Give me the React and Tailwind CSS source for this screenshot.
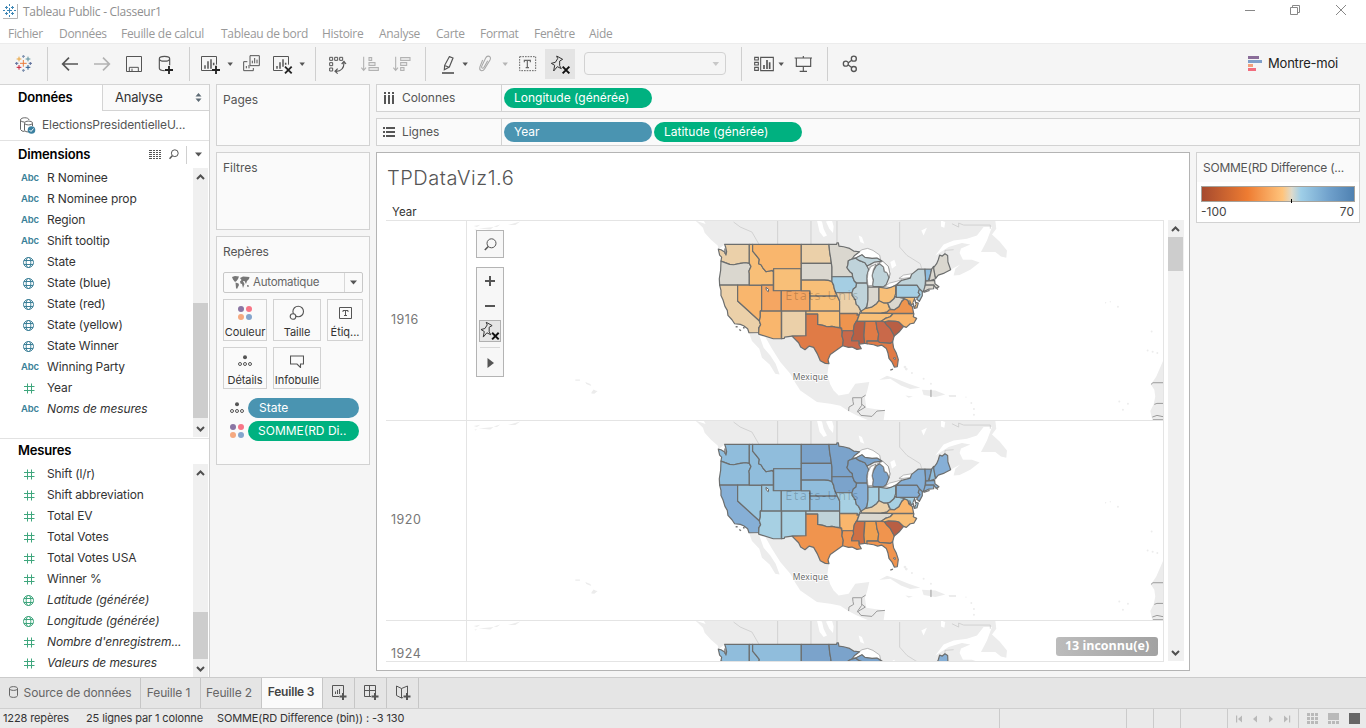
import React from "react";

const US = {
  WA: "M84 86 L92 88 L103 95 L107 104 L109 94 L106 80 L103 72 H177 V129 L165 127 L150 129 L130 133 L118 132 L108 128 L92 122 L94 110 L88 104Z",
  OR: "M92 122 L108 128 L118 132 L130 133 L150 129 L165 127 L177 129 L182 138 L176 152 L177 160 V194 H88 L87 175 L91 150Z",
  CA: "M88 194 H142 V242 L207 301 L211 313 L205 322 L206 337 L176 337 L172 325 L160 316 L150 312 L133 310 L125 298 L113 285 L111 270 L104 258 L98 238 L92 225 L92 210Z",
  NV: "M142 194 H214 V270 L210 272 L210 290 L207 301 L142 242Z",
  ID: "M177 72 H187 V92 L197 104 L207 117 L205 130 L212 133 L218 143 L227 154 L246 150 L249 155 V194 H177 V160 L176 152 L182 138 L177 129Z",
  MT: "M187 72 H333 V145 H250 V154 L246 150 L227 154 L218 143 L212 133 L205 130 L207 117 L197 104 L187 92Z",
  WY: "M250 145 H332 V211 H250Z",
  UT: "M214 194 H249 V211 H273 V272 H214Z",
  CO: "M273 211 H358 V272 H273Z",
  AZ: "M214 272 H273 V355 L249 355 L205 341 L206 322 L211 313 L207 301 L210 290 L210 272Z",
  NM: "M274 272 H347 V346 L305 347 L283 350 L282 354 L274 355Z",
  ND: "M333 72 H416 L418 95 L421 112 L423 129 H333Z",
  SD: "M333 129 H423 L425 140 V184 L414 180 L402 179 H333Z",
  NE: "M333 179 H402 L414 180 L425 184 L430 196 L434 212 L443 227 H359 V211 H333Z",
  KS: "M359 227 H441 L448 242 V272 H359Z",
  OK: "M347 272 H448 V294 L449 321 L435 320 L425 318 L410 319 L398 315 L382 312 V281 H347Z",
  TX: "M347 281 H382 V312 L398 315 L410 319 L425 318 L435 320 L452 323 L455 332 L455 346 L459 360 L457 376 L440 388 L420 402 L413 418 L416 430 L405 429 L390 421 L382 402 L370 381 L357 377 L344 388 L331 380 L325 367 L305 347 L347 346Z",
  MN: "M416 72 H439 L440 67 L444 67 L446 77 L460 79 L478 84 L490 92 L508 94 L492 106 L485 116 L474 121 L473 132 L470 142 L478 153 L486 159 L487 169 H425 V140 L421 112 L418 95Z",
  IA: "M425 169 H487 L492 182 L499 190 L497 200 L489 206 L487 217 H437 L432 206 L430 194 L425 184Z",
  MO: "M437 217 H485 L486 226 L495 238 L498 252 L505 258 L511 272 L505 283 L500 283 L501 279 H448 V242 L441 227Z",
  AR: "M448 280 H501 L500 284 L506 284 L500 300 L492 313 L489 331 H455 L454 323 L449 321Z",
  LA: "M457 331 H489 L490 341 L485 353 L484 361 H506 L506 372 L513 385 L500 387 L485 380 L475 381 L457 376 L459 360 L455 346Z",
  WI: "M474 121 L485 116 L496 113 L506 120 L524 127 L530 137 L535 147 L530 165 L530 188 H499 L492 182 L487 169 L486 159 L478 153 L470 142 L473 132Z",
  UP: "M496 113 L515 103 L524 111 L545 114 L560 113 L575 122 L553 125 L540 132 L530 137 L524 127 L506 120Z",
  MI: "M547 192 L549 178 L545 166 L550 150 L558 136 L568 130 L580 140 L582 154 L590 156 L596 172 L588 192 L580 199 L548 198Z",
  IL: "M499 188 H530 L533 200 V238 L530 258 L523 269 L512 272 L505 258 L498 252 L495 238 L486 226 L485 217 L489 206 L497 200Z",
  IN: "M533 200 H566 V241 L559 250 L545 260 L524 265 L530 258 L533 238Z",
  OH: "M566 200 L590 204 L604 200 L616 195 V220 L611 235 L600 245 L592 248 L580 248 L566 241Z",
  KY: "M512 279 L514 271 L524 265 L545 260 L559 250 L566 241 L580 248 L592 248 L597 262 L605 266 L590 275 L570 278 H512Z",
  TN: "M508 280 L512 278 L570 279 H608 L600 289 L585 294 L572 303 H500Z",
  MS: "M498 303 H523 L521 345 L523 369 L508 371 L506 361 H484 L485 353 L490 341 L489 331 L492 313Z",
  AL: "M524 303 H557 L560 325 L565 340 L563 361 H530 L532 370 L523 369 L521 345Z",
  GA: "M557 303 H583 L590 314 L600 324 L612 345 L607 364 L600 369 L567 366 L563 361 L565 340 L560 325Z",
  FL: "M530 362 H563 L567 366 L600 369 L607 364 L610 383 L618 398 L624 417 L621 439 L612 440 L605 425 L596 414 L593 398 L588 384 L574 374 L562 377 L550 373 L530 370Z",
  SC: "M583 306 L594 301 L614 302 L625 304 L640 318 L626 335 L612 347 L600 324 L590 314Z",
  NC: "M572 303 L585 294 L600 289 L608 280 H671 L669 289 L679 294 L671 308 L660 310 L648 321 L640 318 L625 304 L614 302 L594 301 L583 304Z",
  VA: "M574 279 L590 275 L597 268 L612 268 L626 258 L632 245 L643 235 L653 239 L655 250 L666 258 L670 279Z",
  WV: "M592 248 L600 245 L611 235 L616 228 L630 232 L646 232 L636 240 L626 258 L612 268 L600 266Z",
  MD: "M630 231 H672 L676 246 L684 248 L680 262 L672 264 L668 250 L660 254 L653 240 L643 235Z",
  PA: "M618 194 H680 L688 205 L684 216 L689 223 L682 231 H618Z",
  NJ: "M688 206 L696 211 L696 226 L687 243 L679 236 L689 223 L684 216Z",
  NY: "M618 194 L634 180 L660 173 L664 162 L684 146 H704 L706 170 L704 205 L708 208 L697 214 L688 206 L680 194Z",
  VT: "M704 146 H724 L721 160 L714 181 H706Z",
  NH: "M724 146 L730 138 L733 160 L736 175 L716 182 L721 160Z",
  ME: "M730 142 L739 130 L744 118 L748 104 L756 107 L764 100 L772 105 L773 125 L781 148 L762 158 L744 164 L736 174 L733 160Z",
  MA: "M706 182 L733 180 L734 190 L746 199 L738 204 L730 194 L706 193Z",
  CT: "M705 194 H731 L730 205 L716 206 L699 214Z",
};

const P = {
  a: "#ebd0a9", b: "#f8bf78", c: "#f9b66d", d: "#f5a662", e: "#ee944e", f: "#e07b46", g: "#b85f44", h: "#c9694a",
  n: "#dad7cf", l: "#bfd3da", m: "#a5cee3", o: "#8cbcdf",
  p: "#90bddc", q: "#86afd6", r: "#7ba3cb", s: "#9ac6e0", t: "#a7d0e3",
};

const C1916 = {
  WA: P.a, OR: P.n, CA: P.a, NV: P.c, ID: P.b, MT: P.c, WY: P.b, UT: P.d, CO: P.d, AZ: P.c, NM: P.a, ND: P.a, SD: P.n, NE: P.b, KS: P.b,
  OK: P.b, TX: P.f, MN: P.n, IA: P.m, MO: P.a, AR: P.e, LA: P.h, WI: P.l, UP: P.l, MI: P.l, IL: P.l, IN: P.n, OH: P.b, KY: P.b, TN: P.b,
  MS: P.g, AL: P.f, GA: P.h, FL: P.f, SC: P.g, NC: P.c, VA: P.e, WV: P.n, MD: P.b, PA: P.m, NJ: P.m, NY: P.l, VT: P.o, NH: P.n, ME: P.n, MA: P.n, CT: P.n,
};
const C1920 = {
  WA: P.p, OR: P.p, CA: P.q, NV: P.s, ID: P.p, MT: P.p, WY: P.p, UT: P.s, CO: P.s, AZ: P.t, NM: P.t, ND: P.r, SD: P.q, NE: P.p, KS: P.p,
  OK: P.l, TX: "#f0944e", MN: P.r, IA: P.r, MO: P.t, AR: P.c, LA: "#f0944e", WI: P.r, UP: P.r, MI: P.r, IL: P.q, IN: P.t, OH: P.t, KY: P.a, TN: P.n,
  MS: "#cf7045", AL: "#f0a050", GA: "#f0944e", FL: "#f0944e", SC: P.g, NC: P.b, VA: P.c, WV: P.t, MD: P.t, PA: P.q, NJ: P.q, NY: P.q, VT: P.r, NH: P.p, ME: P.q, MA: P.q, CT: P.q,
};

function MapPane({ colors, height, labels = true }) {
  return (
    <svg className="block" width="696" height={height} viewBox={`0 0 696 ${height}`}>
      <g transform="translate(223.3 -0.6) scale(0.33333)">
        <g fill="#ececec">
          <path d="M15 0 L28 5 L55 14 L72 40 L100 60 L103 72 L85 86 L82 75 L62 58 L43 37 L38 22Z" />
          <path d="M40 0 H915 L918 25 L905 42 L928 63 L950 90 L948 112 L932 108 L915 95 L872 95 L890 60 L905 20 L880 20 L860 45 L830 55 L790 60 L760 72 L735 105 L775 80 L815 68 L840 72 L812 84 L808 98 L818 118 L845 118 L868 126 L840 148 L808 164 L790 165 L795 145 L810 132 L781 148 L772 105 L730 142 L684 146 L620 194 L560 200 L440 200 L100 130 L103 72 L72 60Z" />
          <path d="M176 337 L205 342 L250 355 L305 347 L420 360 L416 430 L411 462 L420 492 L430 510 L445 525 L475 520 L495 490 L537 485 L530 515 L524 532 L528 562 L584 570 L580 600 L535 600 L500 585 L474 572 L450 556 L420 550 L380 545 L330 510 L315 487 L300 460 L270 425 L245 385 L225 350 L207 345 L220 382 L240 405 L256 430 L268 462 L255 460 L238 432 L215 412 L207 385 L185 362Z" />
          <path d="M567 478 L590 466 L625 478 L655 490 L690 502 L660 506 L632 495 L600 475 L580 477Z M695 508 L735 510 L765 522 L735 530 L700 524Z M645 525 L668 528 L655 532Z M775 524 H797 V530 H777Z" />
          <path d="M1419 420 L1408 445 L1398 468 L1382 492 L1392 508 L1395 528 L1390 552 L1380 572 L1386 600 H1419Z" />
          <path d="M-547 509" />
          <path d="M-296 515 L-290 507 L-283 511 L-278 512 L-288 520 L-297 519Z M-345 477 H-331 V481 H-345Z M-315 485 L-300 491 L-297 497 L-312 491Z M-650 17 L-630 13 L-640 20Z M-648 28 L-640 26 L-644 30Z M-635 24 L-590 20 L-600 27Z M-590 18 L-570 12 L-580 20Z M-548 14 L-510 3 L-525 14Z" />
        </g>
        <g fill="#ececec">
          <circle cx="1246" cy="247" r="2" /><circle cx="1260" cy="244" r="2" /><circle cx="1283" cy="259" r="3" /><circle cx="1384" cy="333" r="3" />
          <circle cx="1372" cy="390" r="3" /><circle cx="1387" cy="394" r="3" /><circle cx="1401" cy="398" r="3" /><circle cx="1287" cy="543" r="3" />
          <circle cx="1298" cy="568" r="3" /><circle cx="1313" cy="550" r="3" /><circle cx="827" cy="530" r="2" /><circle cx="843" cy="548" r="3" />
          <circle cx="851" cy="566" r="3" /><circle cx="851" cy="583" r="3" /><circle cx="644" cy="440" r="4" /><circle cx="648" cy="446" r="4" />
          <circle cx="665" cy="458" r="3" /><circle cx="700" cy="475" r="3" /><circle cx="722" cy="490" r="3" />
        </g>
        <g fill="#fff">
          <path d="M380 0 L395 3 L400 25 L410 45 L400 50 L388 35Z M407 3 L425 0 L430 18 L428 38 L417 25Z M505 45 L515 50 L522 70 L510 65Z M693 30 L710 22 L700 45Z M752 0 L765 5 L762 22 L752 18Z M600 125 L612 118 L618 135 L605 145Z" />
        </g>
        <g fill="none" stroke="#c8c8c8" strokeWidth="2.2">
          <path d="M130 5 L150 20 L185 35 L205 70 M262 0 V72 M362 0 V72 M440 0 V66 M628 5 V80 L650 105 L690 130 L694 144 M785 10 L805 20 V8 L820 14 H900 V25 M764 98 V90 L790 88" />
        </g>
        <g fill="#fff" stroke="#9a9a9a" strokeWidth="2">
          <path d="M487 108 L515 88 L532 84 L548 90 L568 104 L571 118 L560 113 L545 114 L524 111 L515 103 L496 113Z" />
          <path d="M535 198 L530 175 L532 155 L540 137 L556 134 L547 152 L545 172 L547 192Z" />
          <path d="M561 130 L577 124 L594 138 L599 160 L597 172 L590 156 L582 154 L580 140 L568 130Z" />
          <path d="M584 198 L598 188 L618 183 L634 178 L618 192 L600 202Z" />
          <path d="M626 174 L640 164 L665 160 L660 171 L638 174Z" />
        </g>
        <g stroke="#6c6e6e" strokeWidth="3.6" strokeLinejoin="round">
          {Object.keys(US).map((k) => (
            <path key={k} d={US[k]} fill={colors[k]} />
          ))}
        </g>
        <g fill="#fff" stroke="#777" strokeWidth="2">
          <path d="M533 196 L531 175 L533 156 L541 139 L557 131 L549 148 L545 166 L548 180 L546 196Z" />
          <path d="M566 127 L578 123 L594 138 L599 160 L597 171 L590 156 L583 153 L580 139Z" />
        </g>
        <g fill="#fff" stroke="#666" strokeWidth="3">
          <path d="M227 201 L235 207 L234 214 L228 209Z" />
          <path d="M609 413 L615 412 L614 418Z" />
          <path d="M672 236 L668 246 L673 262 L677 252Z" />
        </g>
        <path d="M658 240 L664 258 M700 216 L718 210 M735 200 L743 207 M104 84 V100 M136 319 H142 M147 327 L152 331 M158 322 H163 M600 449 L608 446" fill="none" stroke="#777" strokeWidth="4" />
        <g fill="none" stroke="#9b9b9b" strokeWidth="3">
          <path d="M475 572 L476 560 L490 552 L488 543 L487 532 H514 L526 524 M514 532 V555 L502 572 L512 585 M500 575 L525 560 L515 552 M512 585 L545 588 L560 572 L584 570 M722 508 V530" />
          <path d="M1382 492 L1388 487 H1419 M1392 552 L1400 549 H1419 M1386 590 L1400 585 L1419 589 M1388 598 H1419" />
        </g>
        {labels && (
          <g className="font-['Noto_Sans',sans-serif]">
            <text x="285" y="239" fontSize="38" letterSpacing="4.400" fill="#000" fillOpacity=".19">Etats-Unis</text>
            <text x="307" y="478" fontSize="25.5" letterSpacing="0.6" fill="#6b6b6b" stroke="#fff" strokeWidth="5" paintOrder="stroke">Mexique</text>
          </g>
        )}
      </g>
    </svg>
  );
}

/* Toolbar glyphs are drawn on a grid of three units per pixel. */
function Ico({ x, w, className = "", children, stroke = "#555" }) {
  return (
    <svg className={`block shrink-0 ${className}`} width={w} height="32" viewBox={`${x * 3} 144 ${w * 3} 96`} fill="none" stroke={stroke} strokeWidth="3.500">
      {children}
    </svg>
  );
}
const Sep = ({ className }) => <div className={`-mt-px h-[34px] w-px shrink-0 bg-[#cfcfcf] ${className}`} />;
const Caret = ({ className = "", light }) => (
  <svg className={`block h-8 w-2.5 shrink-0 ${className}`} viewBox="0 0 10 32"><path d="M2.500 14.500h5.400L5.200 18z" fill={light ? "#b5b5b5" : "#555"} /></svg>
);

const PinShape = () => (
  <>
    <path d="M410 168 L428 178 L419 183 L419 197 L424 206 L412 200 L401 213 L404 196 L394 190 L406 187 L413 176Z" stroke="#333" strokeWidth="3" strokeLinejoin="round" />
    <path d="M428 200 L448 220 M448 200 L428 220" stroke="#111" strokeWidth="6" />
  </>
);

function Toolbar() {
  return (
    <div className="flex h-[41px] items-start border-t border-[#ececec] bg-[#f5f5f5] pt-1 pl-3.5">
      <Ico x={14} w={20}>
        <g strokeWidth="3">
          <path d="M70 180v20M60 190h20" stroke="#eb7b3c" />
          <path d="M57 170v14M50 177h14" stroke="#e8a33d" /><path d="M84 170v14M77 177h14" stroke="#5b8f9c" />
          <path d="M57 195v14M50 202h14" stroke="#c72037" /><path d="M84 195v14M77 202h14" stroke="#2c5a8c" />
          <path d="M70 165v9M66 169h9M70 207v9M66 211h9" stroke="#7b8fae" /><path d="M45 190h10M50 186v9M86 190h10M91 186v9" stroke="#5e6f9c" />
        </g>
      </Ico>
      <Sep className="ml-[13px]" />
      <Ico x={60} w={20} className="ml-3"><path d="M234 192H190M207 173L188 192L207 211" strokeWidth="5" /></Ico>
      <Ico x={92} w={20} className="ml-3" stroke="#b2b2b2"><path d="M282 192H326M309 173L328 192L309 211" strokeWidth="5" /></Ico>
      <Ico x={124} w={20} className="ml-3"><path d="M379.500 169.500H424.500V214.500H379.500ZM388 214V202H415V214M396 206V214" strokeWidth="3" /></Ico>
      <Ico x={156} w={20} className="ml-3">
        <path d="M478 176V205Q478 212 494 212M509 176V196M478 176C478 167 509 167 509 176C509 186 478 186 478 176Z" strokeWidth="3.500" />
        <path d="M507 198V222M495 210H519" stroke="#222" strokeWidth="5.500" />
      </Ico>
      <Sep className="ml-[13px]" />
      <Ico x={199} w={22} className="ml-[9px]">
        <path d="M636 211.500H604.500V169.500H649.500V194" strokeWidth="3" /><path d="M615 206V196M624 206V184M633 206V178M641 196V188" strokeWidth="4.500" />
        <path d="M648 197V222M636 210H660" stroke="#222" strokeWidth="5.500" />
      </Ico>
      <Caret className="ml-1" />
      <Ico x={241} w={22} className="ml-1.5">
        <path d="M750 167H778V197H750ZM742 185H731V212H760V204" strokeWidth="3" /><path d="M757 190V182M764 190V174M771 190V179M739 205V198M747 205V195" strokeWidth="3" />
      </Ico>
      <Ico x={271} w={22} className="ml-2">
        <path d="M848 211.500H820.500V169.500H865.500V194" strokeWidth="3" /><path d="M831 206V198M840 206V187M849 200V178M857 194V188" strokeWidth="4.500" />
        <path d="M855 200L875 220M875 200L855 220" stroke="#222" strokeWidth="5.500" />
      </Ico>
      <Caret className="ml-1" />
      <Sep className="ml-2" />
      <Ico x={326} w={22} className="ml-2.5">
        <path d="M989 172h9v9h-9zM1004 172h9v9h-9zM1019 172h9v9h-9zM989 188h9v9h-9zM989 204h9v9h-9z" strokeWidth="3" />
        <path d="M1032 188C1032 204 1025 213 1008 214M1025 192L1032 184L1038 192M1013 206L1005 214L1013 221" />
      </Ico>
      <Ico x={359} w={22} className="ml-[11px]" stroke="#b2b2b2"><path d="M1091 170V210M1084 203L1091 211L1098 203M1107 173h8v8h-8zM1107 188h18v8h-18zM1107 203h28v8h-28z" strokeWidth="3.300" /></Ico>
      <Ico x={391} w={22} className="ml-2.5" stroke="#b2b2b2"><path d="M1187 170V210M1180 203L1187 211L1194 203M1202 173h28v8h-28zM1202 188h18v8h-18zM1202 203h10v8h-10z" strokeWidth="3.300" /></Ico>
      <Sep className="ml-3" />
      <Ico x={20} w={16} className="ml-3.5"><path d="M88 170L99 174L88 201L73 209L74 196ZM76 197L87 202" /><path d="M66 219H102" strokeWidth="5" /></Ico>
      <Caret className="ml-1" />
      <Ico x={57} w={16} className="ml-[7px]" stroke="#a9a9a9"><path d="M188 180L180 200C176 213 188 216 194 206L210 180C216 169 202 164 197 174L185 199C184 207 191 206 193 200L203 182" strokeWidth="3.300" /></Ico>
      <Caret className="ml-[7px]" light />
      <Ico x={98} w={20} className="ml-2" stroke="#666">
        <path d="M299 170H347V212H299Z" strokeWidth="3" strokeDasharray="5 3" /><path d="M313 187V181H331V187M322 181V203M317 203H327" />
      </Ico>
      <div className="mt-px ml-[7px] h-[30px] w-[30px] shrink-0 bg-[#e4e4e4]">
        <svg width="30" height="30" viewBox="375 147 90 90" fill="none"><PinShape /></svg>
      </div>
      <div className="mt-1 ml-[9px] flex h-[23px] w-[142px] shrink-0 items-center justify-end rounded-sm border border-[#d2d2d2] pr-1">
        <svg width="10" height="6" viewBox="0 0 10 6"><path d="M1.500 1h6.600L4.800 5z" fill="#c8c8c8" /></svg>
      </div>
      <Sep className="ml-[15px]" />
      <Ico x={332} w={24} className="ml-2.5">
        <path d="M1004 172h11v8h-11zM1004 187h11v8h-11zM1004 202h11v9h-11zM1022 172h38v40h-38z" strokeWidth="3.300" /><path d="M1032 207V195M1041 207V180M1049 207V187" strokeWidth="5" />
      </Ico>
      <Caret />
      <Ico x={373} w={22} className="ml-[7px]"><path d="M1124 174H1176M1129 175V199H1172V175M1150 199V214M1139 214H1161M1150 168V174" /></Ico>
      <Sep className="ml-3" />
      <Ico x={421} w={20} className="ml-[13px]"><path d="M1285 188L1296 180M1285 195L1296 203M1270 191a7.500 7.500 0 1 0 15 0a7.500 7.500 0 1 0 -15 0M1294 176a7.500 7.500 0 1 0 15 0a7.500 7.500 0 1 0 -15 0M1294 207a7.500 7.500 0 1 0 15 0a7.500 7.500 0 1 0 -15 0" strokeWidth="4" /></Ico>
      <div className="mr-[28px] ml-auto flex h-8 w-[90px] items-center gap-[6px] text-[13px] text-[#222]">
        <svg className="shrink-0" width="14" height="16" viewBox="0 0 14 16"><path d="M0 0h11v3H0z" fill="#8a6d99" /><path d="M0 4h14v3H0z" fill="#7f9fc9" /><path d="M0 8h5v3H0z" fill="#f2a07b" /><path d="M0 12h8v3H0z" fill="#f26d7e" /></svg>
        <span className="tracking-[-0.2px] whitespace-nowrap">Montre-moi</span>
      </div>
    </div>
  );
}

function FieldIcon({ t, green }) {
  const c = green ? "#3fa67d" : "#3c8098";
  if (t === "abc") return <span className="w-[18px] text-[9.5px] font-semibold tracking-[-0.2px] text-[#3a7f98]">Abc</span>;
  if (t === "geo")
    return (
      <svg className="ml-[1px]" width="13" height="13" viewBox="0 0 13 13" fill="none" stroke={c} strokeWidth="1"><circle cx="6.500" cy="6.500" r="5" /><ellipse cx="6.500" cy="6.500" rx="2.300" ry="5" /><path d="M2 4.500h9M2 8.500h9" /></svg>
    );
  return (
    <svg className="ml-[2px]" width="13" height="13" viewBox="0 0 13 13" fill="none" stroke="#3fa67d"><path d="M4.500 1.500v10M8.500 1.500v10M1 4.500h10.500M1 8.500h10.500" /></svg>
  );
}

function Field({ t, name, it, green }) {
  return (
    <div className="flex h-[21px] items-center pl-[21px]">
      <div className="flex w-[26px] shrink-0 items-center">
        <FieldIcon t={t} green={green} />
      </div>
      <span className={it ? "pb-0.5 text-[12px] tracking-[-0.13px] whitespace-nowrap text-[#333] italic" : "pb-0.5 text-[12px] tracking-[-0.13px] whitespace-nowrap text-[#333]"}>{name}</span>
    </div>
  );
}

const Chevron = ({ up }) => (
  <svg className="block shrink-0" width="15" height="18" viewBox="0 0 15 18" fill="none" stroke="#505050" strokeWidth="2"><path d={up ? "M4 11l3.500-3.500L11 11" : "M4 8l3.500 3.500L11 8"} /></svg>
);

const DIMS = [
  ["abc", "R Nominee"], ["abc", "R Nominee prop"], ["abc", "Region"], ["abc", "Shift tooltip"], ["geo", "State"], ["geo", "State (blue)"],
  ["geo", "State (red)"], ["geo", "State (yellow)"], ["geo", "State Winner"], ["abc", "Winning Party"], ["num", "Year"], ["abc", "Noms de mesures", true],
];
const MEAS = [
  ["num", "Shift (l/r)"], ["num", "Shift abbreviation"], ["num", "Total EV"], ["num", "Total Votes"], ["num", "Total Votes USA"], ["num", "Winner %"],
  ["geo", "Latitude (générée)", true], ["geo", "Longitude (générée)", true], ["num", "Nombre d'enregistrem...", true], ["num", "Valeurs de mesures", true],
];

function DataPane() {
  return (
    <div className="flex w-[210px] shrink-0 flex-col border-r border-[#d0d0d0] bg-white">
      <div className="flex h-[27px] border-t border-[#d4d4d4]">
        <div className="flex w-[102px] items-center pl-[18px] text-[13px] font-semibold tracking-[-0.2px] text-black">Données</div>
        <div className="flex flex-1 items-center justify-between border-b border-l border-[#d4d4d4] bg-[#fafafa] pr-[7px] pl-3 text-[13px] tracking-[-0.2px] text-[#333]">
          Analyse
          <svg width="7" height="9" viewBox="0 0 7 9" fill="#5e6b75"><path d="M3.500 0L6.500 3.500H.5zM3.500 9L.5 5.500h6z" /></svg>
        </div>
      </div>
      <div className="flex h-[30px] items-center gap-1.5 border-b border-[#e2e2e2] pl-[19px] text-[12px] text-[#555]">
        <svg width="17" height="17" viewBox="0 0 17 17" fill="none" stroke="#666">
          <path d="M1.500 3.500v9q1 2 4 2M10 3c0-3-8.500-3-8.500 0 0 1.500 2 2 4 2M5.500 6.500v7q1 1.500 4 1.500M13.500 6.500V9M5.500 6c0-2.500 8-2.500 8 0s-8 2.500-8 0" /><circle cx="12.500" cy="13" r="3.800" fill="#3b80a0" stroke="none" /><path d="M10.500 13l1.500 1.500 2.500-3" stroke="#fff" />
        </svg>
        <span className="pb-px tracking-[-0.12px]">ElectionsPresidentielleU...</span>
      </div>
      <div className="flex h-[27px] items-center pl-[18px]">
        <span className="text-[13px] font-semibold tracking-[-0.15px] text-black">Dimensions</span>
        <svg className="ml-auto" width="12" height="10" viewBox="0 0 12 10" fill="#555"><path d="M0 0h3v1H0zM4 0h2v1H4zM7 0h2v1H7zM10 0h2v1h-2zM0 2h3v1H0zM4 2h2v1H4zM7 2h2v1H7zM10 2h2v1h-2zM0 4h3v1H0zM4 4h2v1H4zM7 4h2v1H7zM10 4h2v1h-2zM0 6h3v1H0zM4 6h2v1H4zM7 6h2v1H7zM10 6h2v1h-2zM0 8h3v1H0zM4 8h2v1H4zM7 8h2v1H7zM10 8h2v1h-2z" /></svg>
        <svg className="ml-2" width="10" height="11" viewBox="0 0 10 11" fill="none" stroke="#555"><circle cx="5.800" cy="4.200" r="3.400" /><path d="M3.300 6.800L.5 9.800" strokeWidth="1.500" /></svg>
        <div className="ml-[7px] h-[18px] w-px bg-[#d0d0d0]" />
        <svg className="mr-[7px] ml-2" width="7" height="5" viewBox="0 0 7 5"><path d="M0 .5h7L3.500 4.500z" fill="#555" /></svg>
      </div>
      <div className="flex h-[270px]">
        <div className="w-[193px]">{DIMS.map((d) => <Field key={d[1]} t={d[0]} name={d[1]} it={d[2]} />)}</div>
        <div className="flex h-[269px] w-[15px] flex-col bg-[#f0f0f0]">
          <Chevron up />
          <div className="mt-[117px] mb-px h-[117px] bg-[#cdcdcd]" />
          <Chevron />
        </div>
      </div>
      <div className="flex h-[26px] items-center border-t border-[#e2e2e2] pb-0.5 pl-[18px] text-[13px] font-semibold tracking-[-0.2px] text-black">Mesures</div>
      <div className="flex h-[213px]">
        <div className="w-[193px]">{MEAS.map((d) => <Field key={d[1]} t={d[0]} name={d[1]} it={d[2]} green />)}</div>
        <div className="flex w-[15px] flex-col bg-[#f0f0f0]">
          <Chevron up />
          <div className="mt-[130px] h-12 bg-[#cdcdcd]" />
          <Chevron />
        </div>
      </div>
    </div>
  );
}

const Dots3 = () => (
  <svg className="shrink-0" width="14" height="12" viewBox="0 0 14 12" fill="none" stroke="#555"><circle cx="7" cy="2.300" r="2" fill="#555" stroke="none" /><circle cx="2" cy="9" r="1.500" /><circle cx="7" cy="9" r="1.500" /><circle cx="12" cy="9" r="1.500" /></svg>
);
const Dots4 = () => (
  <svg className="shrink-0" width="14" height="14" viewBox="0 0 14 14"><circle cx="3" cy="3" r="3" fill="#8a75a3" /><circle cx="11" cy="3" r="3" fill="#f77586" /><circle cx="3" cy="11" r="3" fill="#f5a980" /><circle cx="11" cy="11" r="3" fill="#84a5cd" /></svg>
);

function MarkBtn({ label, className, children }) {
  return (
    <div className={`flex h-[42px] flex-col items-center justify-between border border-[#d2d2d2] bg-[#fafafa] pt-[5px] text-[11px] tracking-[-0.05px] text-[#333] ${className}`}>
      <div className="flex h-4 items-center">{children}</div>
      <span className="leading-4 whitespace-nowrap">{label}</span>
    </div>
  );
}

function MarksColumn() {
  return (
    <div className="ml-1.5 flex w-[154px] shrink-0 flex-col gap-1.5 text-[12px] text-[#555]">
      <div className="h-[62px] border border-[#d2d2d2] bg-[#fafafa] px-1.5 pt-[6px]">Pages</div>
      <div className="h-[78px] border border-[#d2d2d2] bg-[#fafafa] px-1.5 pt-[6px]">Filtres</div>
      <div className="h-[229px] border border-[#d2d2d2] bg-[#fafafa] px-1.5 pt-[6px]">
        <div className="leading-[18px] tracking-[-0.1px]">Repères</div>
        <div className="mt-[11px] flex h-[21px] w-[140px] items-center rounded-[2px] border border-[#c8c8c8] bg-[#fafafa] text-[#666]">
          <svg className="ml-2 shrink-0" width="18" height="14" viewBox="0 0 18 14" fill="#777"><path d="M0 1l3-1 4 .5L6 3 4.500 5 3 6 1 3.500zM3.500 6.500l3 1L7 9l-2 4-1-1zM8 2l3-1.500L17.500 1 17 3l-2 2-1 3-1.500-3L11 5l1.500 3-1.500 4-1-4-1.500-.5L8 5.500 9.500 4zM15 9l2 .5-.5 1.500L15 10.500z" /></svg>
          <span className="ml-[3px] text-[11.5px] tracking-[-0.25px]">Automatique</span>
          <div className="ml-auto flex h-full w-[18px] items-center justify-center border-l border-[#d8d8d8]"><svg width="7" height="5" viewBox="0 0 7 5"><path d="M0 .5h7L3.500 4.500z" fill="#555" /></svg></div>
        </div>
        <div className="mt-1.5 flex gap-1.5">
          <MarkBtn className="w-11" label="Couleur"><Dots4 /></MarkBtn>
          <MarkBtn className="w-12" label="Taille"><svg width="16" height="16" viewBox="0 0 16 16" fill="none" stroke="#555" strokeWidth="1.100"><circle cx="9.200" cy="6.500" r="5.300" /><circle cx="4" cy="11.500" r="2.800" fill="#fafafa" /></svg></MarkBtn>
          <MarkBtn className="w-9" label="Étiq..."><svg width="13" height="12" viewBox="0 0 13 12" fill="none" stroke="#555"><path d="M.5.5h12v11H.5zM4 5V3.500h5V5M6.500 3.500v5M5 8.500h3" /></svg></MarkBtn>
        </div>
        <div className="mt-1.5 flex gap-1.5">
          <MarkBtn className="w-11" label="Détails"><Dots3 /></MarkBtn>
          <MarkBtn className="w-12" label="Infobulle"><svg width="14" height="13" viewBox="0 0 14 13" fill="none" stroke="#555" strokeWidth="1.100"><path d="M.5 1h13v8h-3v3.500L7 9H.5z" /></svg></MarkBtn>
        </div>
        <div className="mt-[9px] flex h-5 items-center gap-1 pl-[7px]"><Dots3 /><div className="flex h-5 w-[111px] items-center rounded-full bg-[#4a94b1] pl-[11px] text-white">State</div></div>
        <div className="mt-[3px] flex h-5 items-center gap-1 pl-[7px]"><Dots4 /><div className="flex h-5 w-[111px] items-center rounded-full bg-[#00b180] pl-[10px] whitespace-nowrap text-white">SOMME(RD Di..</div></div>
      </div>
    </div>
  );
}

function Shelf({ icon, label, children }) {
  return (
    <div className="flex h-7 w-[984px] items-center border border-[#d2d2d2] bg-[#fafafa]">
      <div className="flex h-full w-[125px] items-center gap-[7px] border-r border-[#d2d2d2] pl-1.5 text-[12px] tracking-[-0.05px] text-[#555]">{icon}{label}</div>
      <div className="flex gap-0.5 pl-0.5">{children}</div>
    </div>
  );
}
const Pill = ({ blue, children }) => (
  <div className={blue ? "flex h-5 w-[148px] items-center rounded-full bg-[#4a94b1] pl-[10px] text-[12px] text-white" : "flex h-5 w-[148px] items-center rounded-full bg-[#00b180] pl-[10px] text-[12px] text-white"}>{children}</div>
);

function MapControls() {
  return (
    <div className="absolute top-[9px] left-[9px] w-7">
      <div className="flex h-7 w-7 items-center justify-center border border-[#b4b4b4] bg-[#f7f7f7]">
        <svg width="13" height="13" viewBox="0 0 13 13" fill="none" stroke="#555"><circle cx="7.500" cy="5.300" r="4.500" /><path d="M4.300 8.500L.8 12" strokeWidth="1.600" /></svg>
      </div>
      <div className="mt-[9px] flex h-[110px] w-7 flex-col items-center border border-[#b4b4b4] bg-[#f7f7f7] pt-2">
        <svg width="10" height="10" viewBox="0 0 10 10" stroke="#555" strokeWidth="2"><path d="M5 0v10M0 5h10" /></svg>
        <svg className="mt-[15px]" width="10" height="10" viewBox="0 0 10 10" stroke="#555" strokeWidth="2"><path d="M0 5h10" /></svg>
        <div className="mt-[9px] h-[22px] w-[22px] border border-[#b0b0b0] bg-[#e6e6e6]"><svg width="20" height="20" viewBox="391 164 61 61" fill="none"><PinShape /></svg></div>
        <div className="mt-[5px] h-px w-5 bg-[#d8d8d8]" />
        <svg className="mt-2.5" width="7" height="10" viewBox="0 0 7 10"><path d="M.5 0L7 5 .5 10z" fill="#555" /></svg>
      </div>
    </div>
  );
}

function View() {
  const cell = "flex w-[81px] shrink-0 items-center border-r border-[#e4e4e4] pl-[5px] text-[12.5px] tracking-[0.5px] text-[#777]";
  return (
    <div className="flex h-[519px] w-[814px] shrink-0 flex-col border border-[#b4b4b4] bg-white pl-[9px]">
      <div className="h-[50px] pt-[11px] pl-px text-[20px] leading-7 font-light tracking-[0.55px] text-[#555]">TPDataViz1.6</div>
      <div className="flex h-[17px] items-center pt-0.5 pl-1.5 text-[11.5px] text-[#333]">Year</div>
      <div className="flex h-[442px] gap-1">
        <div className="w-[778px] border-t border-r border-[#e4e4e4]">
          <div className="flex h-[200px] border-b border-[#e4e4e4]">
            <div className={cell}>1916</div>
            <div className="relative"><MapPane colors={C1916} height={199} /><MapControls /></div>
          </div>
          <div className="flex h-[200px] border-b border-[#e4e4e4]">
            <div className={cell}>1920</div>
            <MapPane colors={C1920} height={199} />
          </div>
          <div className="flex h-[41px] border-b border-[#e4e4e4]">
            <div className={cell + " pt-[26px]"}>1924</div>
            <div className="relative">
              <MapPane colors={C1920} height={40} labels={false} />
              <div className="absolute top-4 right-[5px] flex h-[19px] w-[102px] items-center justify-center rounded-[3px] bg-gradient-to-r from-[#bcbcbc] to-[#a2a2a2] font-['Open_Sans',sans-serif] text-[12.5px] font-bold text-white">13 inconnu(e)</div>
            </div>
          </div>
        </div>
        <div className="flex h-[441px] w-4 flex-col bg-[#f0f0f0]">
          <Chevron up />
          <div className="-mt-px h-[34px] w-[15px] bg-[#cdcdcd]" />
          <div className="mt-auto"><Chevron /></div>
        </div>
      </div>
    </div>
  );
}

function Legend() {
  return (
    <div className="ml-1.5 h-[71px] w-[164px] shrink-0 border border-[#d2d2d2] bg-white text-[12px] text-[#444]">
      <div className="flex h-[29px] items-center bg-[#fafafa] pl-1.5 tracking-[-0.25px] whitespace-nowrap text-[#555]">SOMME(RD Difference (...</div>
      <div className="relative mx-1 mt-1 h-4 border border-[#a6a39c] bg-[linear-gradient(90deg,#a64a2e_0%,#ee7c32_30%,#ffc47c_53%,#dedacb_59%,#9fcfe8_65%,#6fa0cb_84%,#4f81b1_100%)]">
        <div className="absolute top-3 left-[89px] h-[4px] w-px bg-black" />
      </div>
      <div className="flex justify-between pt-px pr-[5px] pl-1 leading-[18px]"><span>-100</span><span>70</span></div>
    </div>
  );
}

function Tabs() {
  const t = "flex h-full items-center justify-center border-r border-[#c6c6c6] text-[12px] tracking-[-0.15px] text-[#666]";
  return (
    <div className="flex h-[31px] border-t border-[#cbcbcb] bg-[#e5e5e5]">
      <div className={t + " w-[141px] gap-1"}>
        <svg className="mb-0.5" width="9" height="12" viewBox="0 0 9 12" fill="none" stroke="#666"><path d="M.5 2.500v7c0 2.500 8 2.500 8 0v-7c0-2.500-8-2.500-8 0s8 2.500 8 0" /></svg>
        <span className="pl-0.5">Source de données</span>
      </div>
      <div className={t + " w-[60px] pr-1"}>Feuille 1</div>
      <div className={t + " w-[61px] pr-1"}>Feuille 2</div>
      <div className="flex h-full w-[61px] items-center justify-center border-r border-[#c6c6c6] bg-[#fafafa] pr-0.5 pb-[3px] text-[12px] font-semibold tracking-[-0.2px] text-[#444]">Feuille 3</div>
      <div className={t + " w-8"}><svg width="16" height="16" viewBox="0 0 16 16" fill="none" stroke="#555"><path d="M8 11.500H1.500v-11h11V8M4.500 9V6.500M6.500 9V5M8.500 9V4" /><path d="M12 8v7M8.500 11.500h7" strokeWidth="2" /></svg></div>
      <div className={t + " w-8"}><svg width="16" height="16" viewBox="0 0 16 16" fill="none" stroke="#555"><path d="M8 11.500H1.500v-11h11V8M1.500 5.500h11M6.500 .5v11" /><path d="M12 8v7M8.500 11.500h7" strokeWidth="2" /></svg></div>
      <div className={t + " w-8"}><svg width="16" height="16" viewBox="0 0 16 16" fill="none" stroke="#555"><path d="M8 12.500L6.500 13 1.500 10.500V1L6.500 3.500 12.500 1V8M6.500 3.500V13" /><path d="M12 8v7M8.500 11.500h7" strokeWidth="2" /></svg></div>
    </div>
  );
}

function Status() {
  return (
    <div className="flex h-5 border-t border-[#cfcfcf] bg-[#eaeaea] pl-[3px] text-[11px] leading-[19px] tracking-[-0.12px] whitespace-nowrap text-[#333]">
      <span className="w-[83px]">1228 repères</span>
      <span className="w-[131px]">25 lignes par 1 colonne</span>
      <span>SOMME(RD Difference (bin)) : -3 130</span>
      <div className="ml-auto flex">
        <div className="w-[127px] border-l border-[#cbcbcb]" />
        <div className="w-[27px] border-l border-[#cbcbcb]" />
        <div className="w-[27px] border-l border-[#cbcbcb]" />
        <div className="w-[47px] border-l border-[#cbcbcb]" />
        <div className="flex w-[71px] items-center border-l border-[#cbcbcb] pl-[8px]">
          <svg width="55" height="8" viewBox="0 0 55 8" fill="#b9b9b9"><path d="M0 .5h1.200v7H0zM6 .5v7L2 4zM21 .5v7L17 4zM33 .5v7L37 4zM48 .5v7L52 4zM53 .5h1.200v7H53z" /></svg>
        </div>
        <div className="flex w-[68px] items-center gap-2.5 border-l border-[#cbcbcb] pl-2">
          <svg width="11" height="11" viewBox="0 0 11 11" fill="#b9b9b9"><path d="M0 0h3v3H0zM4 0h3v3H4zM8 0h3v3H8zM0 4h3v3H0zM4 4h3v3H4zM8 4h3v3H8zM0 8h3v3H0zM4 8h3v3H4zM8 8h3v3H8z" /></svg>
          <svg width="11" height="11" viewBox="0 0 11 11" fill="#b9b9b9"><path d="M0 0h11v7H0zM0 8h3v3H0zM4 8h3v3H4zM8 8h3v3H8z" /></svg>
          <div className="h-[11px] w-[11px] bg-[#666]" />
        </div>
      </div>
    </div>
  );
}

const MENU = [
  ["Fichier", "w-[51px]"], ["Données", "w-[62px]"], ["Feuille de calcul", "w-[100px]"], ["Tableau de bord", "w-[101px]"], ["Histoire", "w-[57px]"],
  ["Analyse", "w-[57px]"], ["Carte", "w-[44px]"], ["Format", "w-[54px]"], ["Fenêtre", "w-[55px]"], ["Aide", "w-[40px]"],
];

export default function App() {
  return (
    <div className="flex h-[728px] w-[1366px] flex-col overflow-hidden bg-white font-['Inter',sans-serif]">
      <div className="flex h-6 items-center pl-[3px] font-['Open_Sans',sans-serif] text-[12px] text-[#8f8f8f]">
        <svg className="-mt-0.5" width="15" height="15" viewBox="0 0 15 15" stroke="#3f87b5" fill="none"><path d="M0 14.500h14.500V0" stroke="#b5b5b5" /><path d="M6.500 4v5M4 6.500h5M3.500 2v3M2 3.500h3M9.500 2v3M8 3.500h3M3.500 8v3M2 9.500h3M9.500 8v3M8 9.500h3M6.500 0v2M6.500 11v2M0 6.500h2M11 6.500h2" /></svg>
        <span className="ml-[5px] tracking-[-0.28px]">Tableau Public - Classeur1</span>
        <svg className="-mt-1 mr-[19px] ml-auto" width="102" height="12" viewBox="0 0 102 12" fill="none" stroke="#888"><path d="M0 6.500h10M45.500 3.500h7v7h-7zM47.500 3.500v-2h7v7h-2M91 1l10 10M101 1L91 11" /></svg>
      </div>
      <div className="flex h-[19px] items-center pl-2 font-['Open_Sans',sans-serif] text-[12px] tracking-[-0.3px] whitespace-nowrap text-[#999]">
        {MENU.map(([m, w]) => <span key={m} className={w}>{m}</span>)}
      </div>
      <Toolbar />
      <div className="flex h-[593px] bg-[#f5f5f5]">
        <DataPane />
        <MarksColumn />
        <div className="ml-1.5 flex flex-col gap-1.5">
          <Shelf label="Colonnes" icon={<svg width="12" height="12" viewBox="0 0 12 12" fill="#555"><path d="M1 0h2v2H1zM5 0h2v2H5zM9 0h2v2H9zM1 3h2v9H1zM5 3h2v9H5zM9 3h2v9H9z" /></svg>}>
            <Pill>Longitude (générée)</Pill>
          </Shelf>
          <Shelf label="Lignes" icon={<svg width="12" height="12" viewBox="0 0 12 12" fill="#555"><path d="M0 1h2v2H0zM0 5h2v2H0zM0 9h2v2H0zM3 1h9v2H3zM3 5h9v2H3zM3 9h9v2H3z" /></svg>}>
            <Pill blue>Year</Pill>
            <Pill>Latitude (générée)</Pill>
          </Shelf>
          <div className="flex items-start">
            <View />
            <Legend />
          </div>
        </div>
      </div>
      <Tabs />
      <Status />
    </div>
  );
}
